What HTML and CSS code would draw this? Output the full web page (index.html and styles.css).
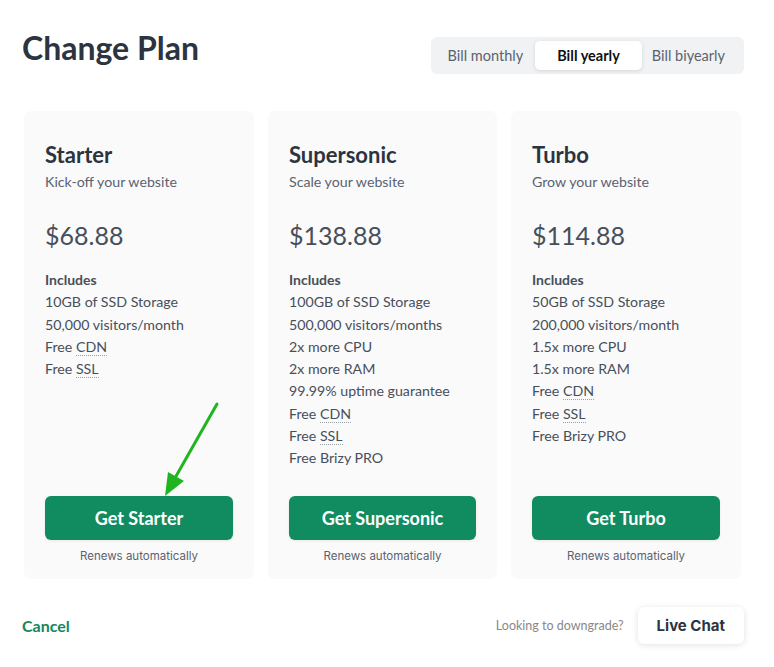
FILE: index.html
```html
<!DOCTYPE html>
<html lang="en">
<head>
  <meta charset="UTF-8" />
  <title>Change Plan</title>
  <meta name="viewport" content="width=device-width, initial-scale=1.0"/>
  <link rel="stylesheet" href="styles.css">
</head>
<body>
  <div class="modal">

    <!-- Header -->
    <div class="modal-header">
      <h1>Change Plan</h1>
      <div class="billing-toggle">
        <span class="toggle-option">Bill monthly</span>
        <span class="toggle-option active">Bill yearly</span>
        <span class="toggle-option">Bill biyearly</span>
      </div>
    </div>

    <!-- Plans -->
    <div class="plans">
      <div class="plan-card">
        <h2>Starter</h2>
        <p class="plan-tagline">Kick-off your website</p>
        <div class="plan-price">$68.88</div>
        <ul class="plan-features">
          <li class="features-title">Includes</li>
          <li>10GB of SSD Storage</li>
          <li>50,000 visitors/month</li>
          <li>Free <span class="hint">CDN</span></li>
          <li>Free <span class="hint">SSL</span></li>
        </ul>
        <div class="plan-footer">
          <button class="plan-btn">Get Starter</button>
          <div class="renews">Renews automatically</div>
        </div>
      </div>

      <div class="plan-card">
        <h2>Supersonic</h2>
        <p class="plan-tagline">Scale your website</p>
        <div class="plan-price">$138.88</div>
        <ul class="plan-features">
          <li class="features-title">Includes</li>
          <li>100GB of SSD Storage</li>
          <li>500,000 visitors/months</li>
          <li>2x more CPU</li>
          <li>2x more RAM</li>
          <li>99.99% uptime guarantee</li>
          <li>Free <span class="hint">CDN</span></li>
          <li>Free <span class="hint">SSL</span></li>
          <li>Free Brizy PRO</li>
        </ul>
        <div class="plan-footer">
          <button class="plan-btn">Get Supersonic</button>
          <div class="renews">Renews automatically</div>
        </div>
      </div>

      <div class="plan-card">
        <h2>Turbo</h2>
        <p class="plan-tagline">Grow your website</p>
        <div class="plan-price">$114.88</div>
        <ul class="plan-features">
          <li class="features-title">Includes</li>
          <li>50GB of SSD Storage</li>
          <li>200,000 visitors/month</li>
          <li>1.5x more CPU</li>
          <li>1.5x more RAM</li>
          <li>Free <span class="hint">CDN</span></li>
          <li>Free <span class="hint">SSL</span></li>
          <li>Free Brizy PRO</li>
        </ul>
        <div class="plan-footer">
          <button class="plan-btn">Get Turbo</button>
          <div class="renews">Renews automatically</div>
        </div>
      </div>
    </div>

    <!-- Footer -->
    <div class="modal-footer">
      <a class="cancel-link" href="#">Cancel</a>
      <div class="downgrade">
        <span>Looking to downgrade?</span>
        <button class="chat-btn">Live Chat</button>
      </div>
    </div>

    <!-- Annotation arrow -->
    <svg class="arrow" width="774" height="667" viewBox="0 0 774 667">
      <line x1="217" y1="404" x2="175" y2="478" stroke="#20b520" stroke-width="3" stroke-linecap="round"/>
      <polygon points="165,496 168,472 184,481" fill="#20b520"/>
    </svg>
  </div>
</body>
</html>
```

FILE: styles.css
```css
* {
  box-sizing: border-box;
}

body {
  margin: 0;
  font-family: Lato, 'Open Sans', sans-serif;
  background-color: #fff;
  color: #2b3440;
}

.modal {
  position: relative;
  width: 774px;
  height: 667px;
  padding: 29px 30px 0 22px;
}

/* HEADER */
.modal-header {
  display: flex;
  justify-content: space-between;
  align-items: flex-start;
  height: 82px;
}

.modal-header h1 {
  margin: 0;
  font-size: 32px;
  font-weight: 700;
  line-height: 38px;
  color: #2b3440;
}

.billing-toggle {
  display: flex;
  margin-top: 8px;
  padding: 4px;
  background-color: #f1f2f4;
  border-radius: 6px;
  height: 37px;
}

.toggle-option {
  display: flex;
  align-items: center;
  padding: 0 15px 0 10px;
  font-size: 14.5px;
  color: #5a6270;
  border-radius: 5px;
}

.toggle-option:first-child {
  padding-left: 13px;
  padding-right: 12px;
}

.toggle-option.active {
  background-color: #fff;
  color: #111;
  font-weight: 700;
  padding: 0 22px;
  box-shadow: 0 1px 4px rgba(0, 0, 0, 0.12);
}

/* PLANS */
.plans {
  display: grid;
  grid-template-columns: 230px 229px 230px;
  gap: 14px;
  margin-left: 2px;
}

.plan-card {
  display: flex;
  flex-direction: column;
  height: 468px;
  padding: 30px 21px 16px;
  background-color: #fafafa;
  border-radius: 7px;
}

.plan-card h2 {
  margin: 0;
  font-size: 22px;
  font-weight: 700;
  line-height: 28px;
  color: #2b3440;
}

.plan-tagline {
  margin: 3px 0 0;
  font-size: 14.2px;
  line-height: 20px;
  color: #5a6270;
}

.plan-price {
  margin-top: 28px;
  font-size: 25px;
  line-height: 30px;
  color: #474f5b;
}

.plan-features {
  list-style: none;
  margin: 19px 0 0;
  padding: 0;
  font-size: 14.2px;
  line-height: 22.3px;
  color: #474f5b;
}

.features-title {
  font-weight: 700;
  font-size: 14px;
}

.hint {
  border-bottom: 1px dotted #9aa0a8;
}

.plan-footer {
  margin-top: auto;
  text-align: center;
}

.plan-btn {
  display: block;
  width: 100%;
  height: 44px;
  border: none;
  border-radius: 6px;
  background-color: #118c61;
  color: #fff;
  font-family: Lato, sans-serif;
  font-size: 18px;
  font-weight: 700;
  box-shadow: 0 1px 3px rgba(0, 0, 0, 0.08);
}

.renews {
  margin-top: 9px;
  font-family: Inter, 'Open Sans', sans-serif;
  font-size: 11.5px;
  color: #5a6270;
}

/* FOOTER */
.modal-footer {
  display: flex;
  justify-content: space-between;
  align-items: center;
  margin-top: 28px;
}

.cancel-link {
  font-size: 16px;
  font-weight: 700;
  color: #14875c;
  text-decoration: none;
}

.downgrade {
  display: flex;
  align-items: center;
  gap: 14px;
  font-size: 12.5px;
  color: #888;
}

.chat-btn {
  height: 37px;
  padding: 0 19px;
  border: none;
  border-radius: 6px;
  background-color: #fff;
  color: #2b3440;
  font-family: Inter, sans-serif;
  font-size: 15px;
  font-weight: 700;
  box-shadow: 0 1px 6px rgba(0, 0, 0, 0.12);
}

/* annotation */
.arrow {
  position: absolute;
  top: 0;
  left: 0;
  pointer-events: none;
}
```
